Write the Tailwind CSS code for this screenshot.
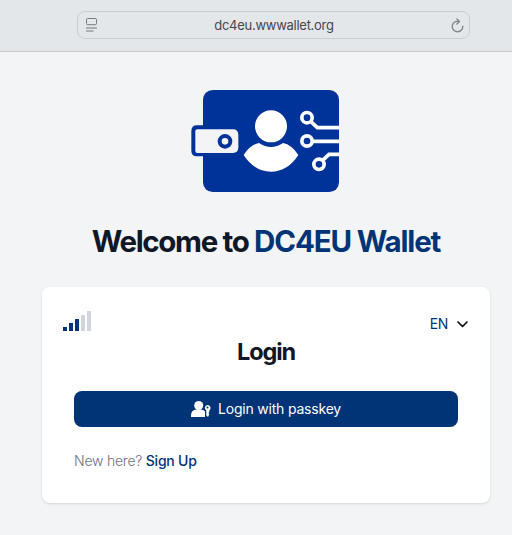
<!DOCTYPE html>
<html lang="en">
<head>
<meta charset="utf-8">
<title>DC4EU Wallet</title>
<script src="https://cdn.jsdelivr.net/npm/@tailwindcss/browser@4"></script>
</head>
<body class="h-[535px] w-[512px] overflow-hidden bg-[#f2f4f6] font-['Inter',sans-serif] text-gray-900">
<header class="flex h-[52px] items-start border-b border-[#c7cacc] bg-[#e4e7ea] pt-[11px] pl-[77px]">
  <div class="flex h-7 w-[393px] items-center justify-between rounded-lg border border-[#cbced1] pr-[5px] pl-2">
    <svg class="h-[14px] w-[11px]" viewBox="0 0 11 14" fill="none" stroke="#77797c"><rect x=".5" y=".5" width="10" height="6.2" rx="1.2"/><path d="M0 10h11M0 13h7.5"/></svg>
    <span class="text-[13px] leading-4 tracking-[-0.27px] whitespace-nowrap text-[#444648]">dc4eu.wwwallet.org</span>
    <svg class="h-[15px] w-[13px]" viewBox="0 0 13 15" fill="none" stroke="#85888b" stroke-width="1.4" stroke-linecap="round" stroke-linejoin="round"><path d="M11.8 8.2A5.3 5.3 0 1 1 6.5 3.2L8.4 3.4M5.9.9L8.5 3.5 5.9 6.1"/></svg>
  </div>
</header>
<main class="flex flex-col pt-[38px] pr-[22px] pl-[42px]">
  <svg class="ml-[149px] h-[102px] w-[148px]" viewBox="18 18 444 306" fill="none">
    <rect x="54" y="18" width="408" height="306" rx="29" fill="#039"/>
    <path d="M60 124H36Q19 124 19 141V200Q19 217 36 217H60Z" fill="#039"/>
    <path d="M37 136H144Q160 136 160 153V190Q160 207 144 207H37Q31 207 31 201V142Q31 136 37 136Z" fill="#f2f4f6"/>
    <circle cx="120" cy="172" r="16" stroke="#039" stroke-width="12"/>
    <circle cx="258" cy="127" r="48" fill="#fff"/>
    <path d="M176 213Q196 182 222 177Q258 201 294 177Q320 182 340 213Q308 263 258 263Q208 263 176 213Z" fill="#fff"/>
    <g stroke="#fff" stroke-width="11"><circle cx="366" cy="101" r="15.5"/><circle cx="366" cy="171" r="15.5"/><circle cx="402" cy="241" r="15.5"/><path d="M377 112L397 131H462M382 172H462M412 230L432 211H462"/></g>
  </svg>
  <h1 class="mt-[31px] text-center text-[29.5px] leading-9 font-bold tracking-[-1.35px] whitespace-nowrap">Welcome to <span class="tracking-[-1.15px] text-[#003476]">DC4EU Wallet</span></h1>
  <section class="mt-7 h-[216px] rounded-lg bg-white px-8 pt-6 shadow-sm">
    <div class="-mx-[11px] flex h-[25px] items-start justify-between">
      <div class="flex h-5 items-end gap-[2px]">
        <i class="h-1 w-1 bg-[#003476]"></i><i class="h-2 w-1 bg-[#003476]"></i><i class="h-3 w-1 bg-[#003476]"></i><i class="h-4 w-1 bg-gray-300"></i><i class="h-5 w-1 bg-gray-300"></i>
      </div>
      <div class="flex h-[26px] items-center gap-[9px] text-sm tracking-[-0.3px] text-[#003476]"><span>EN</span>
        <svg class="mr-px h-[7px] w-[11px]" viewBox="0 0 11 7" fill="none" stroke="#111" stroke-width="1.7" stroke-linecap="round" stroke-linejoin="round"><path d="M1 1l4.5 4.5L10 1"/></svg>
      </div>
    </div>
    <h2 class="text-center text-[23.5px] leading-[31px] font-bold tracking-[-1.1px]">Login</h2>
    <button class="mt-6 flex h-9 w-full items-center justify-center gap-[7px] rounded-lg bg-[#003476] text-sm tracking-[-0.2px] text-white">
      <svg class="h-4 w-5" viewBox="0 0 20 16" fill="#fff"><circle cx="7.7" cy="4.5" r="4.5"/><path d="M0 16V14.5Q0 9 5.5 8.5H10Q12 8.6 14 10.2V16Z"/><path fill-rule="evenodd" d="M16.5 4a3 3 0 0 1 1.8 5.4V11l-.9.9.9 1.1-1.2 3-1.8-1.4V9.5A3 3 0 0 1 16.5 4Zm0 1.5a1 1 0 1 0 0 2 1 1 0 0 0 0-2Z"/></svg>
      <span>Login with passkey</span>
    </button>
    <p class="mt-6 text-sm leading-5 font-light tracking-[-0.23px] text-gray-500">New here? <a class="font-medium text-[#003476]">Sign Up</a></p>
  </section>
</main>
</body>
</html>
